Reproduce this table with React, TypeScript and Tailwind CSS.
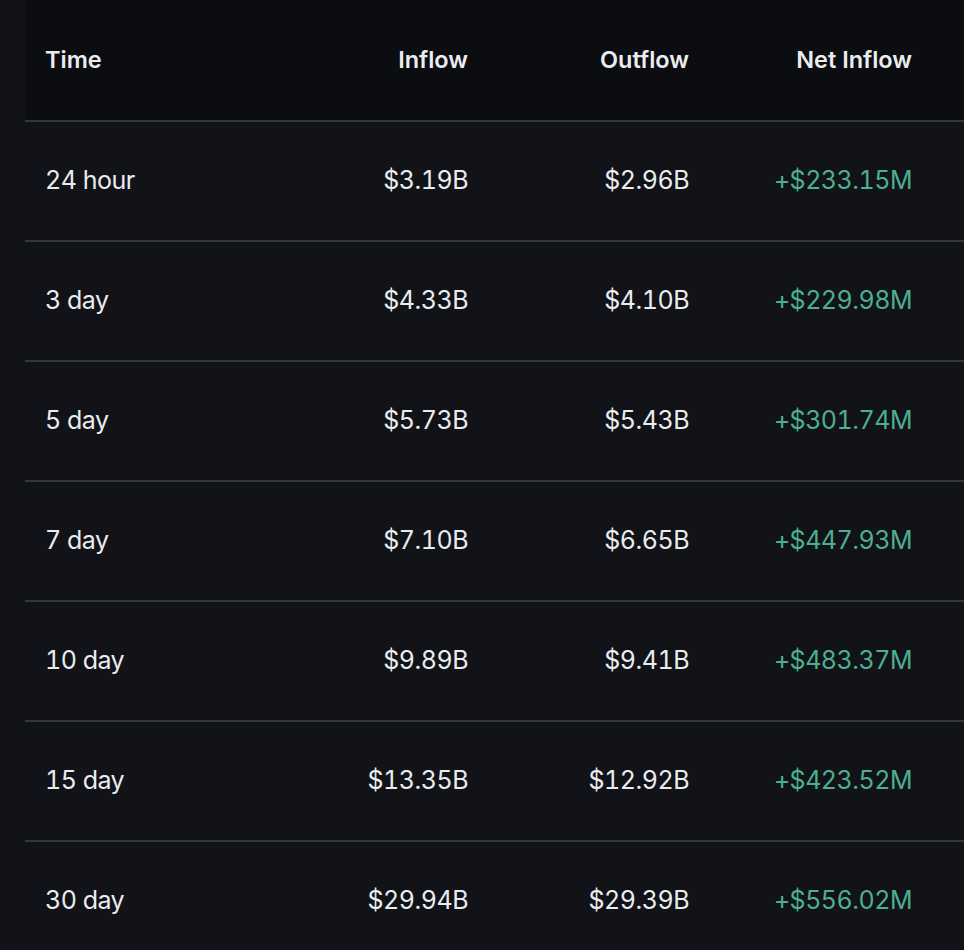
const ROWS = [
  { time: '24 hour', inflow: '$3.19B', outflow: '$2.96B', net: '+$233.15M' },
  { time: '3 day', inflow: '$4.33B', outflow: '$4.10B', net: '+$229.98M' },
  { time: '5 day', inflow: '$5.73B', outflow: '$5.43B', net: '+$301.74M' },
  { time: '7 day', inflow: '$7.10B', outflow: '$6.65B', net: '+$447.93M' },
  { time: '10 day', inflow: '$9.89B', outflow: '$9.41B', net: '+$483.37M' },
  { time: '15 day', inflow: '$13.35B', outflow: '$12.92B', net: '+$423.52M' },
  { time: '30 day', inflow: '$29.94B', outflow: '$29.39B', net: '+$556.02M' },
]

const cols = 'grid grid-cols-[241px_222px_221px_223px_1fr] items-center'

export default function App() {
  return (
    <div
      className="min-h-[950px] bg-[#111318] pl-[25px] overflow-hidden"
      style={{ fontFamily: 'Inter, "Noto Sans", sans-serif' }}
    >
      {/* header */}
      <div className={`${cols} h-[120px] bg-[#0c0d10] text-[23.5px] font-semibold text-[#eaecef]`}>
        <div className="px-5">Time</div>
        <div className="px-5 text-right">Inflow</div>
        <div className="px-5 text-right">Outflow</div>
        <div className="px-5 text-right">Net Inflow</div>
        <div />
      </div>

      {ROWS.map(r => (
        <div key={r.time} className={`${cols} h-[120px] border-t-2 border-[#33373c] text-[25px] tracking-[-0.5px] tabular-nums text-[#eaecef]`}>
          <div className="px-5">{r.time}</div>
          <div className="px-5 text-right">{r.inflow}</div>
          <div className="px-5 text-right">{r.outflow}</div>
          <div className="px-5 text-right text-[#4caf8e]">{r.net}</div>
          <div />
        </div>
      ))}
    </div>
  )
}
